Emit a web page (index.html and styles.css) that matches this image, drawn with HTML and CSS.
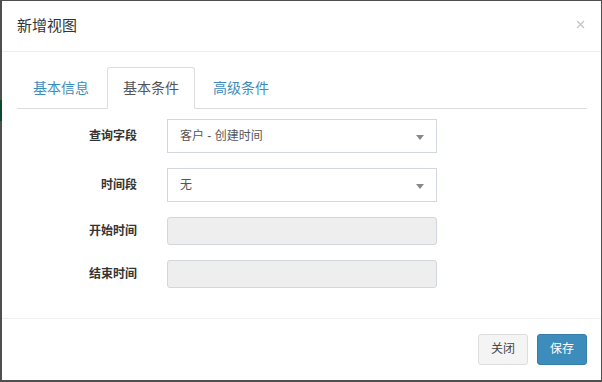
FILE: index.html
```html
<!DOCTYPE html>
<html lang="zh">
<head>
<meta charset="utf-8">
<link rel="stylesheet" href="styles.css">
</head>
<body>
<div class="modal">
  <div class="modal-header">
    <h4 class="modal-title">新增视图</h4>
    <span class="close" aria-label="关闭"><svg width="9" height="9" viewBox="0 0 9 9"><path d="M1 1 L8 8 M8 1 L1 8" stroke="#c4c4c4" stroke-width="1.2" fill="none"/></svg></span>
  </div>
  <div class="modal-body">
    <ul class="nav-tabs">
      <li class="tab">基本信息</li>
      <li class="tab active">基本条件</li>
      <li class="tab">高级条件</li>
    </ul>
    <div class="tab-pane">
      <div class="form-group">
        <label class="label">查询字段</label>
        <div class="select"><span>客户 - 创建时间</span><i class="arrow"></i></div>
      </div>
      <div class="form-group">
        <label class="label">时间段</label>
        <div class="select"><span>无</span><i class="arrow"></i></div>
      </div>
      <div class="form-group">
        <label class="label">开始时间</label>
        <div class="input disabled"></div>
      </div>
      <div class="form-group">
        <label class="label">结束时间</label>
        <div class="input disabled"></div>
      </div>
    </div>
  </div>
  <div class="modal-footer">
    <button class="btn btn-default">关闭</button>
    <button class="btn btn-primary">保存</button>
  </div>
</div>
</body>
</html>
```
FILE: styles.css
```css
* { box-sizing: border-box; }
html, body { margin: 0; padding: 0; }
body {
  width: 602px;
  height: 382px;
  overflow: hidden;
  background: linear-gradient(#0c4a2e, #0c4a2e) 0 100px / 2px 21px no-repeat, #4f4f4f;
  padding: 1px 1px 2px 2px;
  font-family: "Liberation Sans", "Noto Sans CJK SC", sans-serif;
  color: #333;
}
.modal {
  width: 599px;
  height: 379px;
  background: #fff;
  display: flex;
  flex-direction: column;
}
.modal-header {
  height: 52px;
  padding: 0 15px;
  border-bottom: 1px solid #eeeeee;
  display: flex;
  align-items: center;
  justify-content: space-between;
}
.modal-title {
  margin: 0;
  font-size: 15px;
  font-weight: normal;
  line-height: 20px;
  color: #333;
  padding-bottom: 1px;
}
.close {
  display: flex;
  margin-right: 1px;
  margin-bottom: 3px;
}
.modal-body {
  padding: 15px 14px 15px 15px;
  flex: 1;
}
.nav-tabs {
  list-style: none;
  margin: 0;
  padding: 0;
  display: flex;
  gap: 2px;
  border-bottom: 1px solid #dddddd;
  height: 42px;
}
.tab {
  padding: 10px 15px;
  font-size: 14px;
  line-height: 20px;
  color: #3c8dbc;
  border: 1px solid transparent;
  border-radius: 3px 3px 0 0;
  height: 42px;
}
.tab.active {
  color: #555;
  border-color: #dddddd #dddddd transparent;
  background: #fff;
}
.tab-pane {
  padding-top: 10px;
}
.form-group {
  display: flex;
  align-items: center;
  gap: 30px;
  margin-bottom: 15px;
}
.label {
  width: 120px;
  text-align: right;
  font-size: 12px;
  font-weight: bold;
  line-height: 17px;
  color: #333;
}
.select {
  width: 270px;
  height: 34px;
  border: 1px solid #d2d6de;
  padding: 0 12px;
  display: flex;
  align-items: center;
  justify-content: space-between;
  font-size: 12px;
  color: #555;
}
.select span { line-height: 17px; margin-top: 1px; }
.arrow {
  width: 0;
  height: 0;
  border-style: solid;
  border-width: 5px 4px 0 4px;
  border-color: #888 transparent transparent transparent;
  margin-top: 2px;
}
.input {
  width: 270px;
  height: 28px;
  border: 1px solid #d2d6de;
  border-radius: 3px;
}
.input.disabled { background: #eeeeee; }
.modal-footer {
  border-top: 1px solid #eeeeee;
  padding: 15px 14px 15px 15px;
  display: flex;
  justify-content: flex-end;
  gap: 9px;
}
.btn {
  width: 50px;
  height: 31px;
  padding: 0;
  font-family: inherit;
  font-size: 12px;
  line-height: 17px;
  border-radius: 3px;
  border: 1px solid;
  text-align: center;
}
.btn-default {
  background: #f4f4f4;
  border-color: #dddddd;
  color: #444;
}
.btn-primary {
  background: #3c8dbc;
  border-color: #367fa9;
  color: #fff;
}
```
